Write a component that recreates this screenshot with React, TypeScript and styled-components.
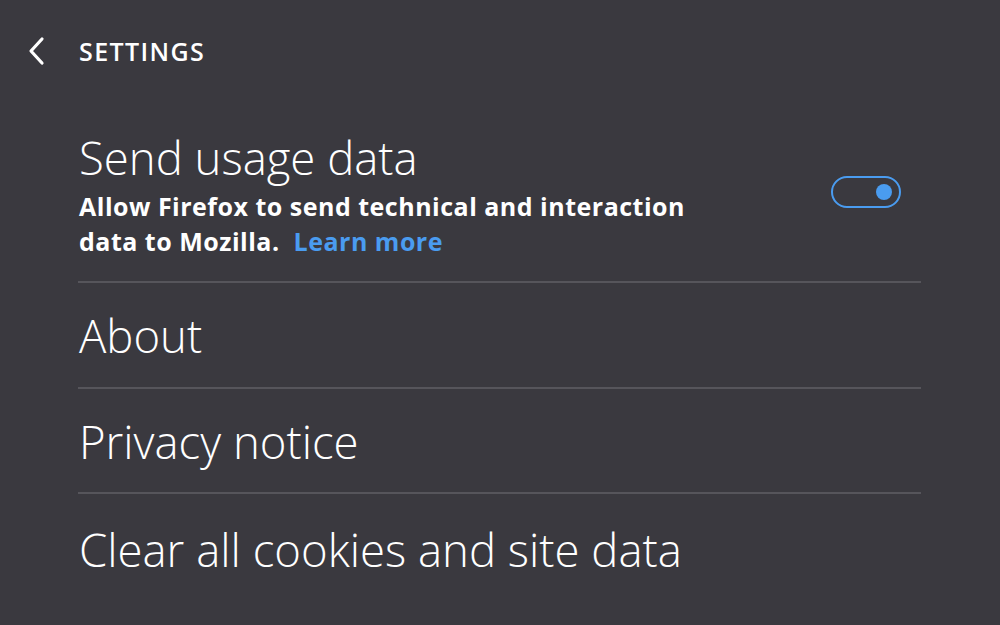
import React from "react";
import styled, { createGlobalStyle } from "styled-components";

const Global = createGlobalStyle`
  html, body { margin: 0; padding: 0; background: #3a393f; }
  body { font-family: "Open Sans", "Noto Sans", sans-serif; color: #ffffff; }
`;

const Page = styled.div`
  width: 1000px;
  height: 625px;
  background: #3a393f;
  overflow: hidden;
  display: flex;
  flex-direction: column;
`;

const Header = styled.div`
  height: 102px;
  display: flex;
  align-items: center;
  padding: 0 0 0 26px;
  box-sizing: border-box;
`;

const BackButton = styled.button`
  width: 22px;
  height: 32px;
  padding: 0;
  border: none;
  background: none;
  display: flex;
  align-items: center;
  justify-content: center;
  margin-right: 31px;
  cursor: pointer;
`;

const HeaderTitle = styled.h1`
  margin: 0;
  font-size: 25px;
  font-weight: 600;
  letter-spacing: 1.4px;
  color: #ffffff;
`;

const List = styled.div`
  display: flex;
  flex-direction: column;
  margin: 0 79px 0 78px;
`;

const Row = styled.div<{ $h: number; $last?: boolean }>`
  height: ${(p) => p.$h}px;
  display: flex;
  align-items: center;
  justify-content: space-between;
  border-bottom: ${(p) => (p.$last ? "none" : "2px solid #56555b")};
  box-sizing: border-box;
  padding-left: 1px;
`;

const TextBlock = styled.div`
  display: flex;
  flex-direction: column;
`;

const Title = styled.div`
  font-size: 45.5px;
  font-weight: 300;
  line-height: 56px;
  color: #ffffff;
`;

const Subtitle = styled.div`
  font-size: 25px;
  font-weight: 700;
  line-height: 35px;
  letter-spacing: 0.5px;
  margin-top: 4px;
  margin-bottom: -4px;
  color: #ffffff;
`;

const Link = styled.a`
  color: #4a9cf0;
  text-decoration: none;
  margin-left: 14px;
`;

const Toggle = styled.div`
  width: 70px;
  height: 32px;
  border: 2px solid #4a9cf0;
  border-radius: 16px;
  box-sizing: border-box;
  display: flex;
  align-items: center;
  justify-content: flex-end;
  padding-right: 7px;
  margin-right: 20px;
  margin-top: 1px;
`;

const Knob = styled.div`
  width: 16px;
  height: 16px;
  border-radius: 50%;
  background: #4a9cf0;
`;

export default function App() {
  return (
    <Page>
      <Global />
      <Header>
        <BackButton aria-label="Back">
          <svg width="20" height="30" viewBox="0 0 20 30" fill="none">
            <path d="M15 3 L4 15 L15 27" stroke="#ffffff" strokeWidth="3.2" strokeLinecap="round" strokeLinejoin="round" />
          </svg>
        </BackButton>
        <HeaderTitle>SETTINGS</HeaderTitle>
      </Header>
      <List>
        <Row $h={181}>
          <TextBlock>
            <Title>Send usage data</Title>
            <Subtitle>
              Allow Firefox to send technical and interaction
              <br />
              data to Mozilla.<Link>Learn more</Link>
            </Subtitle>
          </TextBlock>
          <Toggle>
            <Knob />
          </Toggle>
        </Row>
        <Row $h={106}>
          <Title>About</Title>
        </Row>
        <Row $h={105}>
          <Title>Privacy notice</Title>
        </Row>
        <Row $h={110} $last>
          <Title>Clear all cookies and site data</Title>
        </Row>
      </List>
    </Page>
  );
}
